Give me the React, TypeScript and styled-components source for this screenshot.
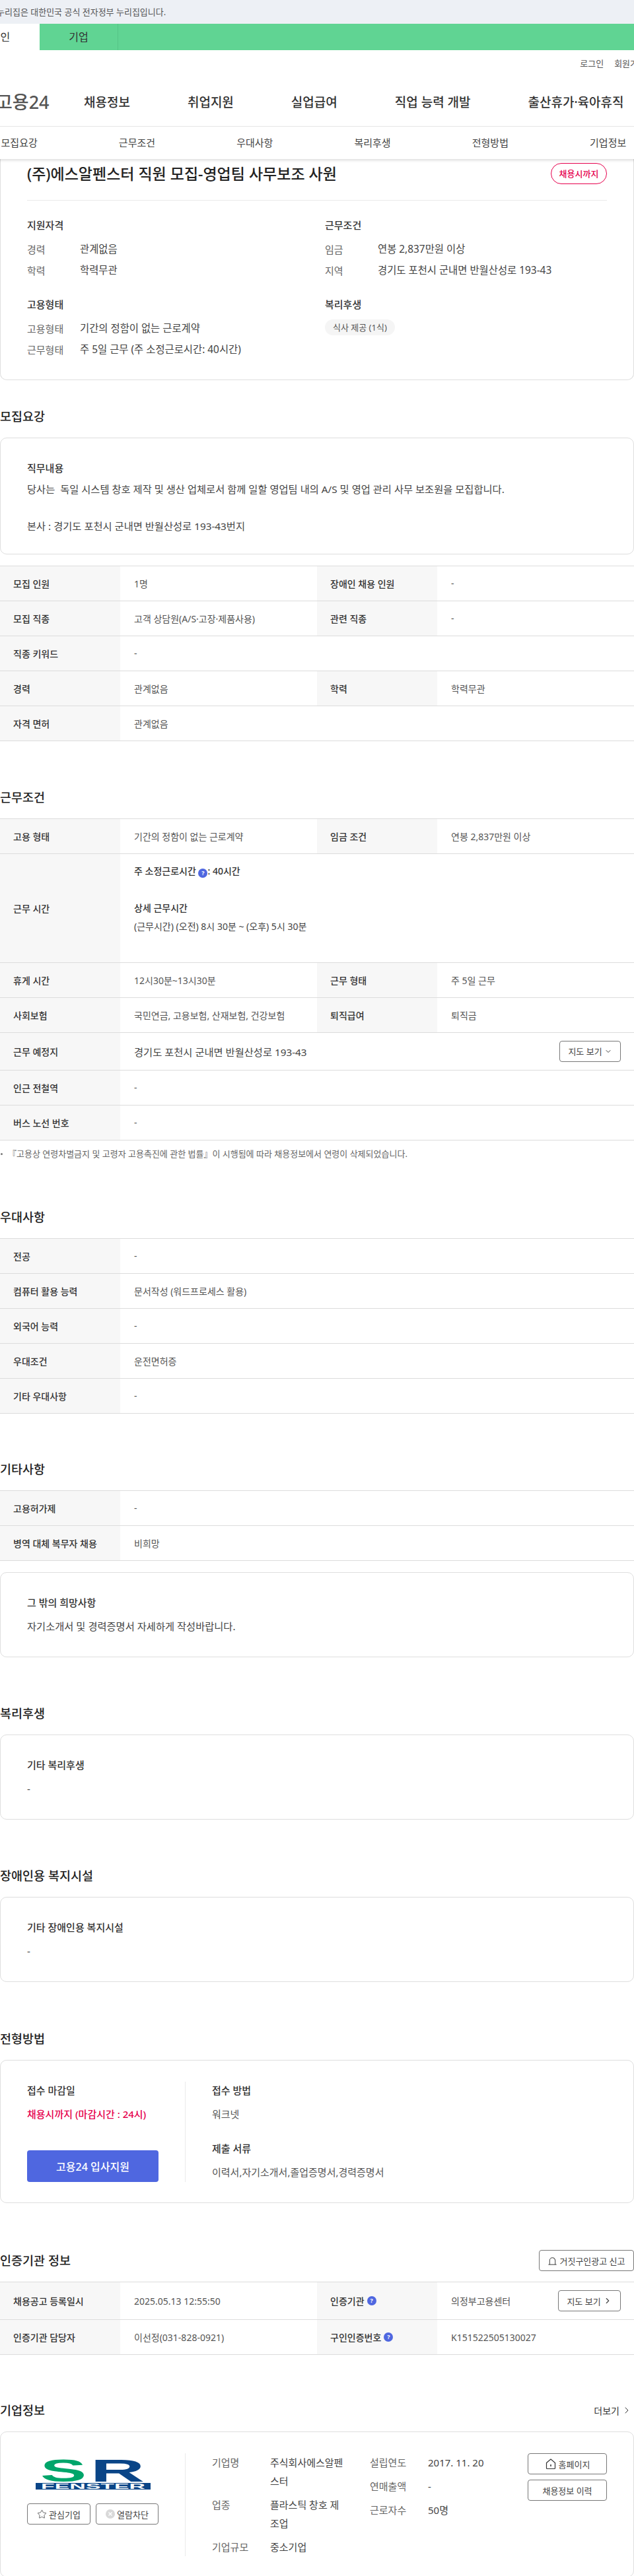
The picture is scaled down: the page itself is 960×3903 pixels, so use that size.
import styled, { createGlobalStyle } from 'styled-components';
import { ChevronDown, ChevronRight, Star } from 'lucide-react';
import { ReactNode } from 'react';

const GlobalStyle = createGlobalStyle`
  html, body {
    margin: 0;
    padding: 0;
    background: #fff;
  }
  * {
    box-sizing: border-box;
  }
  body {
    font-family: "Noto Sans", "Noto Sans CJK KR", sans-serif;
    color: #222;
  }
`;

const Page = styled.div`
  width: 960px;
  overflow: hidden;
`;

const GovBar = styled.div`
  height: 36px;
  line-height: 36px;
  background: #edf0f5;
  color: #555;
  font-size: 13px;
  span {
    margin-left: -5px;
    display: block;
  }
`;

const AudienceBar = styled.div`
  display: flex;
  height: 40px;
  margin-left: -59px;
  width: 1019px;
  background: #60d493;
`;

const AudienceTab = styled.div<{ $active?: boolean }>`
  width: 119px;
  line-height: 40px;
  text-align: center;
  font-size: 16px;
  color: #333;
  background: ${(p) => (p.$active ? '#fff' : 'transparent')};
  border-right: ${(p) => (p.$active ? 'none' : '1px solid #55c487')};
`;

const UtilRow = styled.div`
  display: flex;
  justify-content: flex-end;
  gap: 16px;
  margin-right: -18px;
  padding-top: 10px;
  line-height: 20px;
  font-size: 13px;
  color: #555;
`;

const MainNav = styled.div`
  display: flex;
  align-items: center;
  height: 86px;
  padding-top: 10px;
  border-bottom: 1px solid #eaeaea;
`;

const Logo = styled.div`
  width: 133px;
  margin-left: -6px;
  font-size: 27px;
  font-weight: 500;
  color: #555;
`;

const NavItems = styled.div`
  display: flex;
  gap: 87px;
  font-size: 19px;
  font-weight: 500;
  color: #333;
  white-space: nowrap;
`;

const SubNav = styled.div`
  position: relative;
  z-index: 1;
  height: 49px;
  margin: 0 -60px;
  padding: 0 60px;
  background: #fff;
  box-shadow: 0 2px 4px rgba(0, 0, 0, 0.14);
`;

const SubNavItems = styled.div`
  display: grid;
  grid-template-columns: repeat(6, 178.3px);
  margin-left: -60px;
  line-height: 48px;
  text-align: center;
  font-size: 15px;
  color: #444;
`;

const Card = styled.div`
  border: 1px solid #dedede;
  border-radius: 10px;
`;

const SummaryCard = styled(Card)`
  padding: 6px 40px 29px;
  border-top: none;
  border-top-left-radius: 0;
  border-top-right-radius: 0;
`;

const TitleRow = styled.div`
  display: flex;
  justify-content: space-between;
  align-items: center;
  padding-bottom: 24px;
  border-bottom: 1px solid #eaeaea;
`;

const JobTitle = styled.h1`
  margin: 0;
  font-size: 23px;
  font-weight: 500;
  line-height: 32px;
  color: #222;
`;

const DeadlineBadge = styled.span`
  width: 85px;
  height: 32px;
  line-height: 30px;
  text-align: center;
  border: 1px solid #e6004d;
  border-radius: 16px;
  color: #e6004d;
  font-size: 13px;
  font-weight: 500;
`;

const SummaryGrid = styled.div`
  display: grid;
  grid-template-columns: 451px 1fr;
  row-gap: 24px;
  padding-top: 26px;
`;

const SummaryHeading = styled.h3`
  margin: 0 0 10px;
  font-size: 15px;
  font-weight: 500;
  line-height: 22px;
  color: #333;
`;

const SummaryRow = styled.div`
  display: flex;
  height: 32px;
  line-height: 32px;
  font-size: 15.4px;
  color: #444;
`;

const SummaryLabel = styled.span`
  width: 80px;
  font-size: 15px;
  color: #666;
`;

const Pill = styled.span`
  display: inline-block;
  margin-top: 2px;
  height: 24px;
  line-height: 24px;
  padding: 0 12px;
  border-radius: 12px;
  background: #f5f5f5;
  color: #555;
  font-size: 13px;
`;

const Section = styled.section<{ $top: number }>`
  margin-top: ${(p) => p.$top}px;
`;

const SectionHead = styled.div`
  display: flex;
  justify-content: space-between;
  align-items: center;
  height: 28px;
  margin-bottom: 18px;
`;

const SectionTitle = styled.h2`
  margin: 0;
  font-size: 18.5px;
  font-weight: 500;
  line-height: 28px;
  color: #222;
`;

const MoreLink = styled.span`
  display: flex;
  align-items: center;
  gap: 3px;
  padding-right: 3px;
  font-size: 14px;
  color: #333;
`;

const TextCard = styled(Card)<{ $gap: number; $bottom: number; $mt?: number }>`
  display: flex;
  flex-direction: column;
  gap: ${(p) => p.$gap}px;
  margin-top: ${(p) => p.$mt ?? 0}px;
  padding: 31px 40px ${(p) => p.$bottom}px;
`;

const CardTitle = styled.div`
  font-size: 15px;
  font-weight: 500;
  line-height: 28px;
  color: #333;
`;

const CardBody = styled.div`
  font-size: 15.3px;
  line-height: 28.2px;
  color: #444;
  white-space: pre-wrap;
`;

const Table = styled.div<{ $mt?: number }>`
  margin-top: ${(p) => p.$mt ?? 0}px;
  border-top: 1px solid #dcdcdc;
`;

const Row = styled.div<{ $height?: number }>`
  display: flex;
  height: ${(p) => p.$height ?? 53}px;
  border-bottom: 1px solid #dcdcdc;
`;

const Th = styled.div`
  display: flex;
  align-items: center;
  flex: 0 0 182px;
  gap: 4px;
  padding-left: 20px;
  background: #f7f7f7;
  font-size: 14px;
  font-weight: 500;
  color: #333;
`;

const Td = styled.div`
  display: flex;
  align-items: center;
  justify-content: space-between;
  flex: 1;
  padding: 0 20px 0 21px;
  font-size: 14px;
  color: #555;
`;

const HoursCell = styled.div`
  padding: 12px 21px 0;
  font-size: 14px;
  line-height: 28px;
  color: #444;
`;

const HoursTitle = styled.div<{ $gap?: boolean }>`
  margin-bottom: ${(p) => (p.$gap ? 28 : 0)}px;
  font-weight: 500;
  color: #333;
`;

const Address = styled.span`
  font-size: 15.3px;
  color: #444;
`;

const HelpDot = styled.span`
  display: inline-block;
  width: 14px;
  height: 14px;
  line-height: 14px;
  border-radius: 50%;
  background: #4f67e0;
  color: #fff;
  font-size: 9px;
  font-weight: 700;
  text-align: center;
  vertical-align: -1px;
`;

const Note = styled.div`
  position: relative;
  margin-top: 10px;
  padding-left: 12px;
  font-size: 13px;
  line-height: 20px;
  color: #666;
  &::before {
    content: '';
    position: absolute;
    left: 1px;
    top: 9px;
    width: 3px;
    height: 3px;
    border-radius: 50%;
    background: #777;
  }
`;

const OutlineButton = styled.button<{ $w?: number; $h?: number }>`
  display: inline-flex;
  align-items: center;
  justify-content: center;
  gap: 3px;
  width: ${(p) => (p.$w ? `${p.$w}px` : 'auto')};
  height: ${(p) => p.$h ?? 32}px;
  padding: 0;
  border: 1px solid #777;
  border-radius: 4px;
  background: #fff;
  font-family: inherit;
  font-size: 13px;
  color: #444;
  white-space: nowrap;
`;

const ApplyCard = styled(Card)`
  display: flex;
  padding: 32px 40px 31px;
`;

const ApplyLeft = styled.div`
  display: flex;
  flex-direction: column;
  flex: 0 0 240px;
  height: 152px;
  padding-right: 40px;
  border-right: 1px solid #eaeaea;
`;

const ApplyRight = styled.div`
  padding-left: 40px;
`;

const ApplyLabel = styled.div<{ $top?: number }>`
  margin: ${(p) => p.$top ?? 0}px 0 10px;
  font-size: 15px;
  font-weight: 500;
  line-height: 26px;
  color: #333;
`;

const ApplyValue = styled.div<{ $alert?: boolean }>`
  font-size: 15px;
  font-weight: ${(p) => (p.$alert ? 500 : 400)};
  line-height: 26px;
  color: ${(p) => (p.$alert ? '#e6004d' : '#555')};
`;

const ApplyButton = styled.button`
  height: 48px;
  margin-top: auto;
  border: none;
  border-radius: 4px;
  background: #4f67e0;
  font-family: inherit;
  font-size: 16px;
  font-weight: 500;
  color: #fff;
`;

const CompanyCard = styled(Card)`
  display: flex;
  padding: 32px 40px 31px;
`;

const CompanyLeft = styled.div`
  flex: 0 0 240px;
  height: 156px;
  padding: 9px 40px 0 0;
  border-right: 1px solid #eaeaea;
`;

const LogoMark = styled.svg`
  display: block;
  width: 174px;
  height: 46px;
  margin-left: 13px;
`;

const CompanyActions = styled.div`
  display: flex;
  justify-content: space-between;
  margin-top: 21px;
`;

const CompanyInfo = styled.div`
  display: flex;
  flex: 1;
  gap: 40px;
  padding-left: 40px;
`;

const InfoList = styled.dl`
  display: flex;
  flex-direction: column;
  gap: 8px;
  flex: 0 0 199px;
  margin: 0;
`;

const InfoItem = styled.div`
  display: flex;
  font-size: 15px;
  line-height: 28px;
`;

const InfoLabel = styled.dt`
  flex: 0 0 88px;
  color: #666;
`;

const InfoValue = styled.dd`
  flex: 0 0 111px;
  margin: 0;
  color: #444;
  word-break: break-all;
`;

const CompanyButtons = styled.div`
  display: flex;
  flex-direction: column;
  gap: 8px;
  flex: 0 0 120px;
`;

type Cell = { label: ReactNode; value: ReactNode };

function InfoTableRow({ cells, height }: { cells: Cell[]; height?: number }) {
  return (
    <Row $height={height}>
      {cells.map((c, i) => (
        <Cells key={i} cell={c} />
      ))}
    </Row>
  );
}

function Cells({ cell }: { cell: Cell }) {
  return (
    <>
      <Th>{cell.label}</Th>
      <Td>{cell.value}</Td>
    </>
  );
}

function SingleRows({ rows }: { rows: [string, string][] }) {
  return (
    <>
      {rows.map(([label, value]) => (
        <InfoTableRow key={label} cells={[{ label, value }]} />
      ))}
    </>
  );
}

function ReportIcon() {
  return (
    <svg width="15" height="15" viewBox="0 0 16 16" fill="none" stroke="#444" strokeWidth="1.1">
      <path d="M3.5 14V7.5a4.5 4.5 0 0 1 9 0V14" />
      <path d="M1.5 14h13" />
    </svg>
  );
}

function HomeIcon() {
  return (
    <svg width="18" height="18" viewBox="0 0 18 18" fill="none" stroke="#333" strokeWidth="1.2">
      <path d="M2.5 7.500 9 2l6.500 5.500v8a1 1 0 0 1-1 1h-11a1 1 0 0 1-1-1z" />
      <path d="M9 10v3" strokeWidth="1.5" />
    </svg>
  );
}

function BlockIcon() {
  return (
    <svg width="14" height="14" viewBox="0 0 14 14">
      <circle cx="7" cy="7" r="7" fill="#d9d9d9" />
      <path d="M4.500 4.500l5 5M9.500 4.500l-5 5" stroke="#fff" strokeWidth="1.4" />
    </svg>
  );
}

export default function App() {
  return (
    <Page>
      <GlobalStyle />
      <GovBar>
        <span>누리집은 대한민국 공식 전자정부 누리집입니다.</span>
      </GovBar>
      <AudienceBar>
        <AudienceTab $active>개인</AudienceTab>
        <AudienceTab>기업</AudienceTab>
      </AudienceBar>
      <UtilRow>
        <span>로그인</span>
        <span>회원가입</span>
      </UtilRow>
      <MainNav>
        <Logo>고용24</Logo>
        <NavItems>
          <span>채용정보</span>
          <span>취업지원</span>
          <span>실업급여</span>
          <span>직업 능력 개발</span>
          <span>출산휴가·육아휴직</span>
        </NavItems>
      </MainNav>
      <SubNav>
        <SubNavItems>
          <span>모집요강</span>
          <span>근무조건</span>
          <span>우대사항</span>
          <span>복리후생</span>
          <span>전형방법</span>
          <span>기업정보</span>
        </SubNavItems>
      </SubNav>

      <SummaryCard>
        <TitleRow>
          <JobTitle>(주)에스알펜스터 직원 모집-영업팀 사무보조 사원</JobTitle>
          <DeadlineBadge>채용시까지</DeadlineBadge>
        </TitleRow>
        <SummaryGrid>
          <div>
            <SummaryHeading>지원자격</SummaryHeading>
            <SummaryRow>
              <SummaryLabel>경력</SummaryLabel>관계없음
            </SummaryRow>
            <SummaryRow>
              <SummaryLabel>학력</SummaryLabel>학력무관
            </SummaryRow>
          </div>
          <div>
            <SummaryHeading>근무조건</SummaryHeading>
            <SummaryRow>
              <SummaryLabel>임금</SummaryLabel>연봉 2,837만원 이상
            </SummaryRow>
            <SummaryRow>
              <SummaryLabel>지역</SummaryLabel>경기도 포천시 군내면 반월산성로 193-43
            </SummaryRow>
          </div>
          <div>
            <SummaryHeading>고용형태</SummaryHeading>
            <SummaryRow>
              <SummaryLabel>고용형태</SummaryLabel>기간의 정함이 없는 근로계약
            </SummaryRow>
            <SummaryRow>
              <SummaryLabel>근무형태</SummaryLabel>주 5일 근무 (주 소정근로시간: 40시간)
            </SummaryRow>
          </div>
          <div>
            <SummaryHeading>복리후생</SummaryHeading>
            <Pill>식사 제공 (1식)</Pill>
          </div>
        </SummaryGrid>
      </SummaryCard>

      <Section $top={41}>
        <SectionHead>
          <SectionTitle>모집요강</SectionTitle>
        </SectionHead>
        <TextCard $gap={4} $bottom={27}>
          <CardTitle>직무내용</CardTitle>
          <CardBody>
            {'당사는  독일 시스템 창호 제작 및 생산 업체로서 함께 일할 영업팀 내의 A/S 및 영업 관리 사무 보조원을 모집합니다.\n\n본사 : 경기도 포천시 군내면 반월산성로 193-43번지'}
          </CardBody>
        </TextCard>
        <Table $mt={17}>
          <InfoTableRow
            cells={[
              { label: '모집 인원', value: '1명' },
              { label: '장애인 채용 인원', value: '-' },
            ]}
          />
          <InfoTableRow
            cells={[
              { label: '모집 직종', value: '고객 상담원(A/S·고장·제품사용)' },
              { label: '관련 직종', value: '-' },
            ]}
          />
          <InfoTableRow cells={[{ label: '직종 키워드', value: '-' }]} />
          <InfoTableRow
            cells={[
              { label: '경력', value: '관계없음' },
              { label: '학력', value: '학력무관' },
            ]}
          />
          <InfoTableRow cells={[{ label: '자격 면허', value: '관계없음' }]} />
        </Table>
      </Section>

      <Section $top={71}>
        <SectionHead>
          <SectionTitle>근무조건</SectionTitle>
        </SectionHead>
        <Table>
          <InfoTableRow
            cells={[
              { label: '고용 형태', value: '기간의 정함이 없는 근로계약' },
              { label: '임금 조건', value: '연봉 2,837만원 이상' },
            ]}
          />
          <Row $height={165}>
            <Th>근무 시간</Th>
            <HoursCell>
              <HoursTitle $gap>
                주 소정근로시간 <HelpDot>?</HelpDot>: 40시간
              </HoursTitle>
              <HoursTitle>상세 근무시간</HoursTitle>
              (근무시간) (오전) 8시 30분 ~ (오후) 5시 30분
            </HoursCell>
          </Row>
          <InfoTableRow
            cells={[
              { label: '휴게 시간', value: '12시30분~13시30분' },
              { label: '근무 형태', value: '주 5일 근무' },
            ]}
          />
          <InfoTableRow
            cells={[
              { label: '사회보험', value: '국민연금, 고용보험, 산재보험, 건강보험' },
              { label: '퇴직급여', value: '퇴직금' },
            ]}
          />
          <InfoTableRow
            height={57}
            cells={[
              {
                label: '근무 예정지',
                value: (
                  <>
                    <Address>경기도 포천시 군내면 반월산성로 193-43</Address>
                    <OutlineButton $w={93}>
                      지도 보기 <ChevronDown size={12} />
                    </OutlineButton>
                  </>
                ),
              },
            ]}
          />
          <InfoTableRow cells={[{ label: '인근 전철역', value: '-' }]} />
          <InfoTableRow cells={[{ label: '버스 노선 번호', value: '-' }]} />
        </Table>
        <Note>『고용상 연령차별금지 및 고령자 고용촉진에 관한 법률』이 시행됨에 따라 채용정보에서 연령이 삭제되었습니다.</Note>
      </Section>

      <Section $top={72}>
        <SectionHead>
          <SectionTitle>우대사항</SectionTitle>
        </SectionHead>
        <Table>
          <SingleRows
            rows={[
              ['전공', '-'],
              ['컴퓨터 활용 능력', '문서작성 (워드프로세스 활용)'],
              ['외국어 능력', '-'],
              ['우대조건', '운전면허증'],
              ['기타 우대사항', '-'],
            ]}
          />
        </Table>
      </Section>

      <Section $top={70}>
        <SectionHead>
          <SectionTitle>기타사항</SectionTitle>
        </SectionHead>
        <Table>
          <SingleRows
            rows={[
              ['고용허가제', '-'],
              ['병역 대체 복무자 채용', '비희망'],
            ]}
          />
        </Table>
        <TextCard $gap={8} $bottom={32} $mt={17}>
          <CardTitle>그 밖의 희망사항</CardTitle>
          <CardBody>자기소개서 및 경력증명서 자세하게 작성바랍니다.</CardBody>
        </TextCard>
      </Section>

      <Section $top={71}>
        <SectionHead>
          <SectionTitle>복리후생</SectionTitle>
        </SectionHead>
        <TextCard $gap={8} $bottom={32}>
          <CardTitle>기타 복리후생</CardTitle>
          <CardBody>-</CardBody>
        </TextCard>
      </Section>

      <Section $top={71}>
        <SectionHead>
          <SectionTitle>장애인용 복지시설</SectionTitle>
        </SectionHead>
        <TextCard $gap={8} $bottom={32}>
          <CardTitle>기타 장애인용 복지시설</CardTitle>
          <CardBody>-</CardBody>
        </TextCard>
      </Section>

      <Section $top={72}>
        <SectionHead>
          <SectionTitle>전형방법</SectionTitle>
        </SectionHead>
        <ApplyCard>
          <ApplyLeft>
            <ApplyLabel>접수 마감일</ApplyLabel>
            <ApplyValue $alert>채용시까지 (마감시간 : 24시)</ApplyValue>
            <ApplyButton>고용24 입사지원</ApplyButton>
          </ApplyLeft>
          <ApplyRight>
            <ApplyLabel>접수 방법</ApplyLabel>
            <ApplyValue>워크넷</ApplyValue>
            <ApplyLabel $top={26}>제출 서류</ApplyLabel>
            <ApplyValue>이력서,자기소개서,졸업증명서,경력증명서</ApplyValue>
          </ApplyRight>
        </ApplyCard>
      </Section>

      <Section $top={73}>
        <SectionHead>
          <SectionTitle>인증기관 정보</SectionTitle>
          <OutlineButton $w={144} $h={32}>
            <ReportIcon /> 거짓구인광고 신고
          </OutlineButton>
        </SectionHead>
        <Table>
          <InfoTableRow
            height={57}
            cells={[
              { label: '채용공고 등록일시', value: '2025.05.13 12:55:50' },
              {
                label: (
                  <>
                    인증기관 <HelpDot>?</HelpDot>
                  </>
                ),
                value: (
                  <>
                    의정부고용센터
                    <OutlineButton $w={95}>
                      지도 보기 <ChevronRight size={14} />
                    </OutlineButton>
                  </>
                ),
              },
            ]}
          />
          <InfoTableRow
            cells={[
              { label: '인증기관 담당자', value: '이선정(031-828-0921)' },
              {
                label: (
                  <>
                    구인인증번호 <HelpDot>?</HelpDot>
                  </>
                ),
                value: 'K151522505130027',
              },
            ]}
          />
        </Table>
      </Section>

      <Section $top={70}>
        <SectionHead>
          <SectionTitle>기업정보</SectionTitle>
          <MoreLink>
            더보기 <ChevronRight size={16} strokeWidth={1.5} />
          </MoreLink>
        </SectionHead>
        <CompanyCard>
          <CompanyLeft>
            <LogoMark viewBox="0 0 174 46">
              <text x="7" y="34" fontFamily="Liberation Sans" fontWeight="700" fontSize="48" fill="#00a56a" textLength="70" lengthAdjust="spacingAndGlyphs">
                S
              </text>
              <text x="83" y="34" fontFamily="Liberation Sans" fontWeight="700" fontSize="48" fill="#0a4587" textLength="82" lengthAdjust="spacingAndGlyphs">
                R
              </text>
              <rect x="0" y="36" width="174" height="10" fill="#0a4587" />
              <text x="8" y="45" fontFamily="Liberation Sans" fontWeight="700" fontSize="11" fill="#fff" textLength="158" lengthAdjust="spacingAndGlyphs">
                FENSTER
              </text>
            </LogoMark>
            <CompanyActions>
              <OutlineButton $w={96}>
                <Star size={15} strokeWidth={1.3} /> 관심기업
              </OutlineButton>
              <OutlineButton $w={95}>
                <BlockIcon /> 열람차단
              </OutlineButton>
            </CompanyActions>
          </CompanyLeft>
          <CompanyInfo>
            <InfoList>
              <InfoItem>
                <InfoLabel>기업명</InfoLabel>
                <InfoValue>주식회사에스알펜스터</InfoValue>
              </InfoItem>
              <InfoItem>
                <InfoLabel>업종</InfoLabel>
                <InfoValue>플라스틱 창호 제조업</InfoValue>
              </InfoItem>
              <InfoItem>
                <InfoLabel>기업규모</InfoLabel>
                <InfoValue>중소기업</InfoValue>
              </InfoItem>
            </InfoList>
            <InfoList>
              <InfoItem>
                <InfoLabel>설립연도</InfoLabel>
                <InfoValue>2017. 11. 20</InfoValue>
              </InfoItem>
              <InfoItem>
                <InfoLabel>연매출액</InfoLabel>
                <InfoValue>-</InfoValue>
              </InfoItem>
              <InfoItem>
                <InfoLabel>근로자수</InfoLabel>
                <InfoValue>50명</InfoValue>
              </InfoItem>
            </InfoList>
            <CompanyButtons>
              <OutlineButton>
                <HomeIcon /> 홈페이지
              </OutlineButton>
              <OutlineButton>채용정보 이력</OutlineButton>
            </CompanyButtons>
          </CompanyInfo>
        </CompanyCard>
      </Section>
    </Page>
  );
}
